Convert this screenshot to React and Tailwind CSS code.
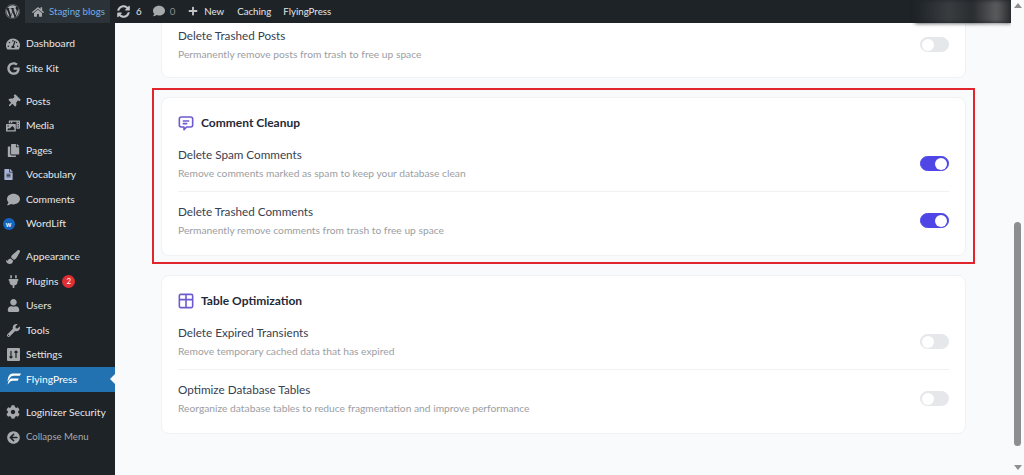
import React from "react";
import { FaWordpress, FaHome, FaSyncAlt, FaComment, FaPlus, FaTachometerAlt, FaGoogle, FaThumbtack, FaPhotoVideo, FaCopy, FaFileAlt, FaPaintBrush, FaPlug, FaUser, FaWrench, FaCog, FaArrowCircleLeft } from "react-icons/fa";

const font = "font-['Lato','Noto_Sans',sans-serif]";

function WordLift() {
  return <span className="flex h-[12px] w-[12px] items-center justify-center rounded-full bg-[#1565c0] text-[7px] font-bold text-white">w</span>;
}
function Flying() {
  return (
    <svg width="15" height="12" viewBox="0 0 15 12" fill="#fff">
      <path d="M4 1.5C5 .6 6 .4 7.5.4H15l-1.2 2.4H7.6C6 2.8 4.8 3.6 3.8 5L1.6 8.4C1.6 5.5 2.4 3 4 1.5z" />
      <path d="M5 5.6h7.8l-1.1 2.2H6.6c-1.4 0-2.6.7-3.4 2L1.6 11.6C2 8.6 3 6.6 5 5.6z" />
    </svg>
  );
}
function Settings() {
  return (
    <svg width="13" height="13" viewBox="0 0 13 13">
      <rect width="13" height="13" rx="1" fill="#a7aaad" />
      <path d="M4 3v7M2.5 8.5 4 10l1.5-1.5M9 10V3M7.5 4.5 9 3l1.5 1.5" fill="none" stroke="#1d2327" strokeWidth="1.2" />
    </svg>
  );
}

const groups = [
  [
    ["Dashboard", <FaTachometerAlt size={14} />],
    ["Site Kit", <FaGoogle size={13} />],
  ],
  [
    ["Posts", <FaThumbtack size={13} className="rotate-45" />],
    ["Media", <FaPhotoVideo size={14} />],
    ["Pages", <FaCopy size={13} />],
    ["Vocabulary", <FaFileAlt size={11} className="-ml-[9px] text-[#a9b4d6]" />],
    ["Comments", <FaComment size={13} />],
    ["WordLift", <span className="-ml-[9px]"><WordLift /></span>],
  ],
  [
    ["Appearance", <FaPaintBrush size={14} />],
    ["Plugins", <FaPlug size={13} />, "2"],
    ["Users", <FaUser size={13} />],
    ["Tools", <FaWrench size={13} />],
    ["Settings", <Settings />],
  ],
];

function MenuItem({ label, icon, badge, active }) {
  return (
    <div className={`relative flex h-[24.5px] items-center whitespace-nowrap text-[10.3px] ${active ? "bg-[#2271b1] text-white" : "text-[#e4e6e8]"}`}>
      <span className={`flex w-[26px] shrink-0 items-center justify-center ${active ? "text-white" : "text-[#a7aaad]"}`}>{icon}</span>
      <span>{label}</span>
      {badge && <span className="ml-[4px] flex h-[13px] w-[13px] items-center justify-center rounded-full bg-[#e02e34] text-[8px] text-white">{badge}</span>}
      {active && <span className="absolute right-0 top-[7px] h-0 w-0 border-y-[5px] border-r-[5px] border-y-transparent border-r-[#f9fafb]" />}
    </div>
  );
}

function Sidebar() {
  return (
    <aside className="flex w-[115px] shrink-0 flex-col bg-[#1d2327] pt-[8.5px]">
      {groups.map((g, i) => (
        <div key={i} className="mb-[8.5px]">
          {g.map(([l, ic, b]) => <MenuItem key={l} label={l} icon={ic} badge={b} />)}
          {i === 2 && <MenuItem label="FlyingPress" icon={<Flying />} active />}
        </div>
      ))}
      <MenuItem label="Loginizer Security" icon={<FaCog size={14} />} />
      <div className="flex h-[26px] items-center whitespace-nowrap text-[9.6px] text-[#a7aaad]">
        <span className="flex w-[26px] justify-center"><FaArrowCircleLeft size={13} /></span>
        Collapse Menu
      </div>
    </aside>
  );
}

function TopBar() {
  return (
    <header className="flex h-[23px] shrink-0 items-center whitespace-nowrap bg-[#1d2327] text-[9.7px] text-[#e4e6e8]">
      <span className="flex w-[25px] justify-center text-[#a7aaad]"><FaWordpress size={15} /></span>
      <span className="flex h-full w-[85px] items-center gap-[5px] bg-[#2c3338] pl-[7px] text-[#72aee6]">
        <FaHome size={12} className="text-[#a7aaad]" />Staging blogs
      </span>
      <span className="ml-[7px] flex items-center gap-[6px]"><FaSyncAlt size={13} className="text-[#c3c4c7]" />6</span>
      <span className="ml-[11px] flex items-center gap-[5px] text-[#8c8f94]"><FaComment size={12} className="text-[#a7aaad]" />0</span>
      <span className="ml-[13px] flex items-center gap-[6px]"><FaPlus size={10} className="text-[#c3c4c7]" />New</span>
      <span className="ml-[13px]">Caching</span>
      <span className="ml-[12px]">FlyingPress</span>
      <span className="ml-auto mr-0 h-full w-[96px] bg-[linear-gradient(90deg,#1d2327,#3a3d40_35%,#2a2d30_60%,#5a5c5e_85%,#2a2d30)] blur-[2px]" />
    </header>
  );
}

function Toggle({ on }) {
  return (
    <span className={`flex h-[15px] w-[29px] shrink-0 items-center rounded-full border border-solid p-[1px] ${on ? "justify-end border-[#4f46e5] bg-[#4f46e5]" : "justify-start border-[#e5e7eb] bg-[#e5e7eb]"}`}>
      <span className="h-[12px] w-[12px] rounded-full bg-white" />
    </span>
  );
}

function Row({ title, desc, on, last, first }) {
  return (
    <div className={`flex items-center justify-between ${last ? "" : "border-b border-[#f0f1f3] pb-[10px]"} ${first ? "" : "pt-[11px]"}`}>
      <div>
        <div className="text-[11.7px] leading-[17px] text-[#374151]">{title}</div>
        <div className="mt-[2px] text-[10.25px] leading-[16px] text-[#9b9ea3]">{desc}</div>
      </div>
      <Toggle on={on} />
    </div>
  );
}

function Card({ icon, title, children, className = "" }) {
  return (
    <section className={`rounded-[8px] border border-[#f1f2f4] bg-white px-[16px] ${className}`}>
      {title && (
        <div className="flex items-center gap-[7px] pt-[16px] pb-[15px]">
          {icon}
          <h2 className="text-[12px] leading-[17px] font-bold text-[#1f2937]">{title}</h2>
        </div>
      )}
      {children}
    </section>
  );
}

export default function App() {
  return (
    <div className={`relative flex h-[475px] w-[1024px] overflow-hidden bg-[#f9fafb] ${font}`}>
      <div className="flex w-[1011px] shrink-0 flex-col">
        <TopBar />
        <div className="flex min-h-0 flex-1">
          <Sidebar />
          <main className="min-w-0 flex-1 overflow-hidden pl-[46px] pr-[45px]">
            <Card className="-mt-[42px] pt-[34px] pb-[15px]">
              <Row title="Delete Trashed Posts" desc="Permanently remove posts from trash to free up space" last />
            </Card>
            <Card className="mt-[19px] pb-[17px]" title="Comment Cleanup" icon={
              <svg width="16" height="16" viewBox="0 0 24 24" fill="none" stroke="#6d5bd0" strokeWidth="2.4" strokeLinecap="round" strokeLinejoin="round"><path d="M5 3h14a3 3 0 0 1 3 3v9a3 3 0 0 1-3 3h-6l-4 4v-4H5a3 3 0 0 1-3-3V6a3 3 0 0 1 3-3z" /><path d="M8 9h8M8 13h5" /></svg>
            }>
              <Row first title="Delete Spam Comments" desc="Remove comments marked as spam to keep your database clean" on />
              <Row last title="Delete Trashed Comments" desc="Permanently remove comments from trash to free up space" on />
            </Card>
            <Card className="mt-[19px] pb-[17px]" title="Table Optimization" icon={
              <svg width="16" height="16" viewBox="0 0 24 24" fill="none" stroke="#6d5bd0" strokeWidth="2.4" strokeLinejoin="round"><rect x="2" y="2" width="20" height="20" rx="2" /><path d="M2 10h20M12 2v20" /></svg>
            }>
              <Row first title="Delete Expired Transients" desc="Remove temporary cached data that has expired" />
              <Row last title="Optimize Database Tables" desc="Reorganize database tables to reduce fragmentation and improve performance" />
            </Card>
          </main>
        </div>
      </div>
      <div className="relative flex w-[13px] shrink-0 flex-col items-center bg-[#f9fafb]">
        <span className="mt-[3px] h-0 w-0 border-x-[4px] border-b-[5px] border-x-transparent border-b-[#8e8e8e]" />
        <span className="mt-[214px] h-[224px] w-[7px] rounded-full bg-[#8e8e8e]" />
        <span className="mt-[19px] h-0 w-0 border-x-[4px] border-t-[5px] border-x-transparent border-t-[#8e8e8e]" />
      </div>
      <div className="pointer-events-none absolute left-[152px] top-[88px] h-[176px] w-[823px] border-2 border-[#e0262c]" />
    </div>
  );
}
